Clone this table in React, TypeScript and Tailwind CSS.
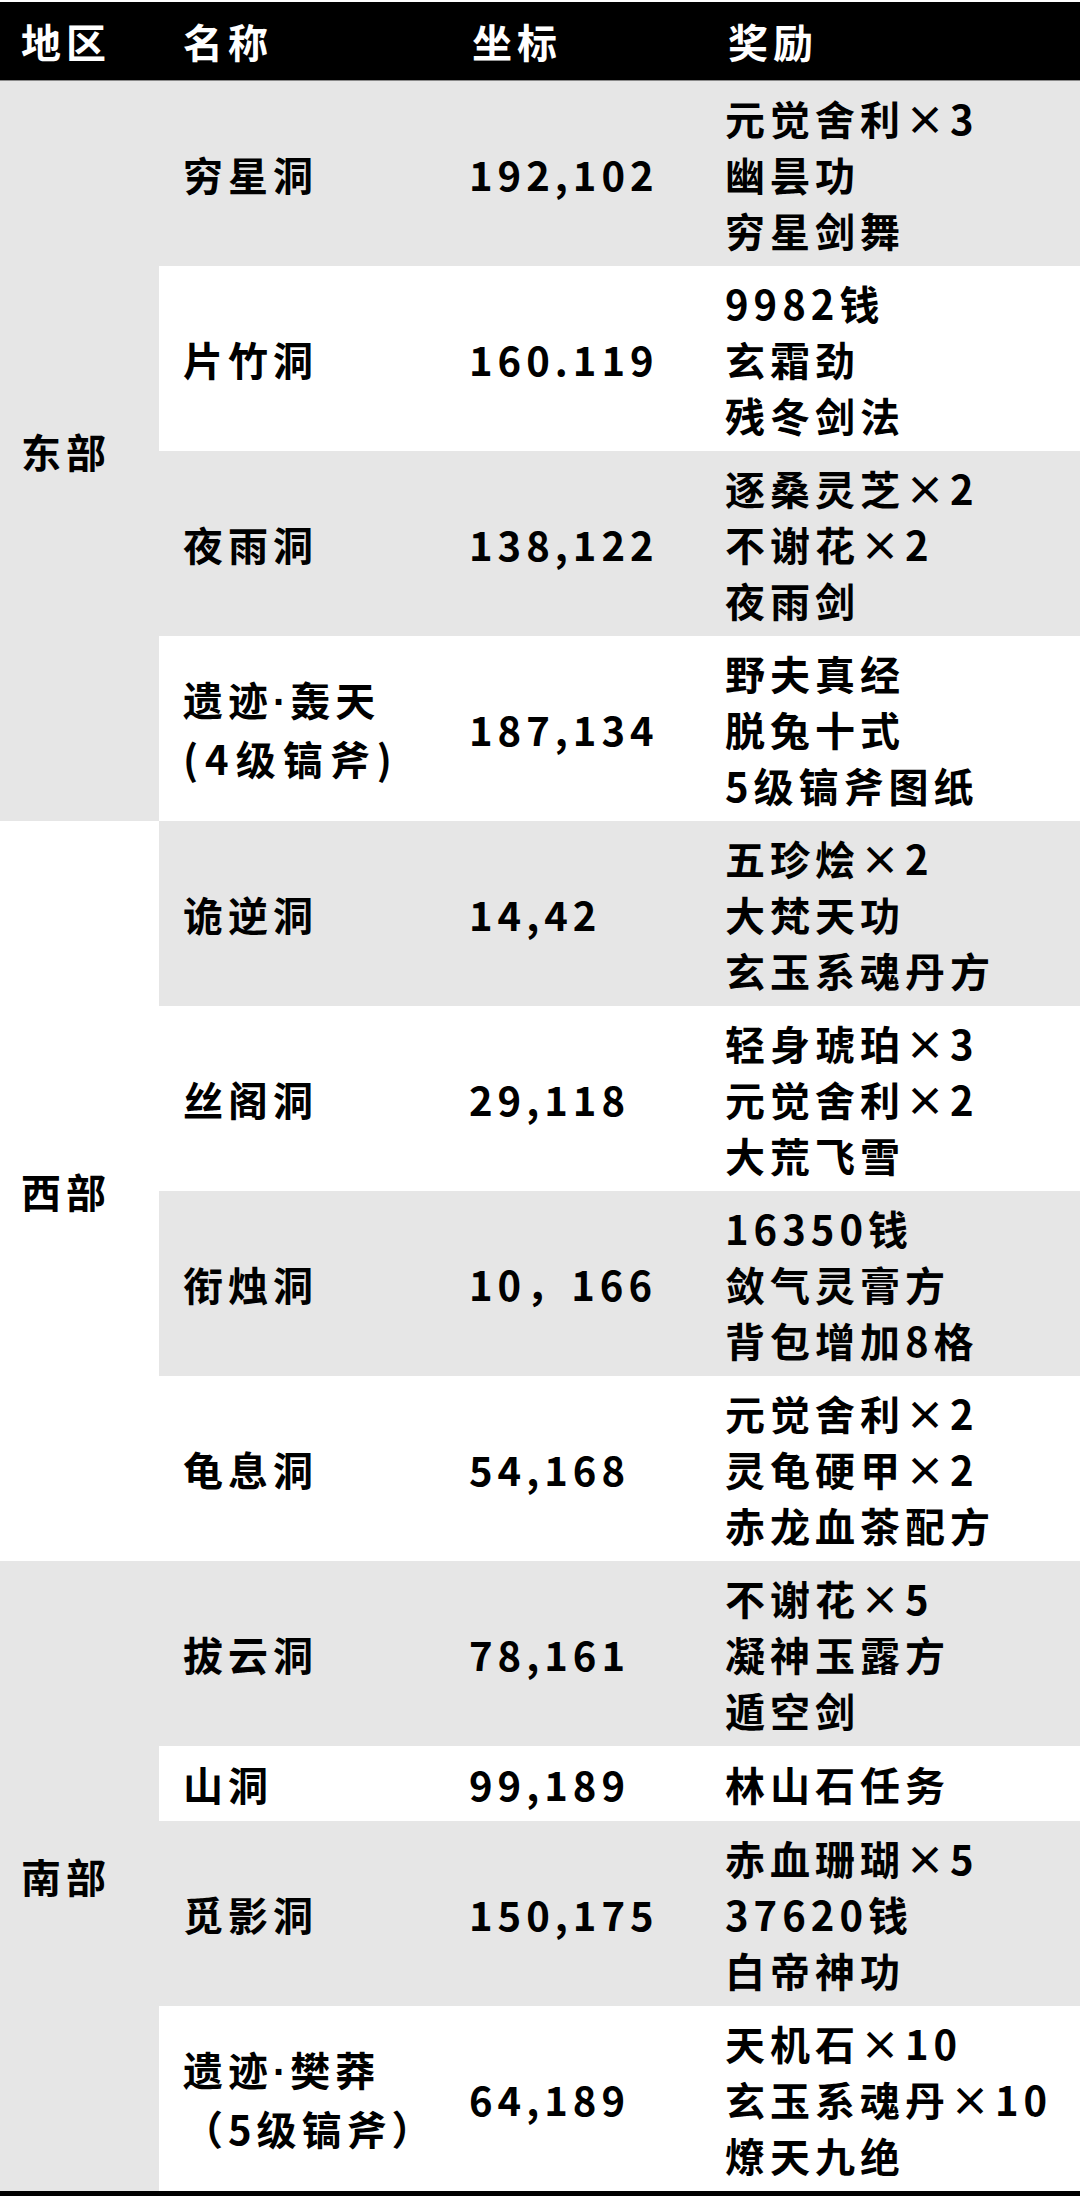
const font = {
  fontFamily: '"Noto Sans CJK SC", "Noto Sans", sans-serif',
};

type Cave = {
  name: string[];
  coord: string;
  rewards: string[];
  short?: boolean;
};

type Region = {
  label: string;
  gray: boolean;
  caves: Cave[];
};

const regions: Region[] = [
  {
    label: "东部",
    gray: true,
    caves: [
      { name: ["穷星洞"], coord: "192,102", rewards: ["元觉舍利×3", "幽昙功", "穷星剑舞"] },
      { name: ["片竹洞"], coord: "160.119", rewards: ["9982钱", "玄霜劲", "残冬剑法"] },
      { name: ["夜雨洞"], coord: "138,122", rewards: ["逐桑灵芝×2", "不谢花×2", "夜雨剑"] },
      { name: ["遗迹·轰天", "(4级镐斧)"], coord: "187,134", rewards: ["野夫真经", "脱兔十式", "5级镐斧图纸"] },
    ],
  },
  {
    label: "西部",
    gray: false,
    caves: [
      { name: ["诡逆洞"], coord: "14,42", rewards: ["五珍烩×2", "大梵天功", "玄玉系魂丹方"] },
      { name: ["丝阁洞"], coord: "29,118", rewards: ["轻身琥珀×3", "元觉舍利×2", "大荒飞雪"] },
      { name: ["衔烛洞"], coord: "10，166", rewards: ["16350钱", "敛气灵膏方", "背包增加8格"] },
      { name: ["龟息洞"], coord: "54,168", rewards: ["元觉舍利×2", "灵龟硬甲×2", "赤龙血茶配方"] },
    ],
  },
  {
    label: "南部",
    gray: true,
    caves: [
      { name: ["拔云洞"], coord: "78,161", rewards: ["不谢花×5", "凝神玉露方", "遁空剑"] },
      { name: ["山洞"], coord: "99,189", rewards: ["林山石任务"], short: true },
      { name: ["觅影洞"], coord: "150,175", rewards: ["赤血珊瑚×5", "37620钱", "白帝神功"] },
      { name: ["遗迹·樊莽", "（5级镐斧）"], coord: "64,189", rewards: ["天机石×10", "玄玉系魂丹×10", "燎天九绝"] },
    ],
  },
];

// the middle dot in the picture is a narrow latin one, not the full-width CJK one
function Name({ text }: { text: string }) {
  const parts = text.split("·");
  if (parts.length < 2) return <>{text}</>;
  return (
    <>
      {parts[0]}
      <span className="tracking-[4px]" style={{ fontFamily: '"Liberation Sans", sans-serif' }}>
        ·
      </span>
      {parts[1]}
    </>
  );
}

export default function App() {
  let rowIndex = 0;

  return (
    <div className="w-[1080px] min-h-[2209px] bg-white text-black pt-[2px]" style={font}>
      {/* header */}
      <div className="grid grid-cols-[159px_286px_256px_1fr] h-[79px] bg-black border-b border-[#8a8a8a] text-white text-[40px] font-bold tracking-[5px] items-center">
        <div className="pl-[21px]">地区</div>
        <div className="pl-[24px]">名称</div>
        <div className="pl-[27px]">坐标</div>
        <div className="pl-[27px]">奖励</div>
      </div>

      <div className="grid grid-cols-[159px_286px_256px_1fr] text-[40px] font-bold tracking-[5px] leading-[56px]">
        {regions.map((region) => {
          const rowStart = rowIndex;
          rowIndex += region.caves.length;
          return (
            <div key={region.label} className="contents">
              <div
                className={`row-span-4 flex items-center pl-[21px] ${region.gray ? "bg-[#e6e6e6]" : "bg-white"}`}
              >
                {region.label}
              </div>
              {region.caves.map((cave, i) => {
                const gray = (rowStart + i) % 2 === 0;
                const bg = gray ? "bg-[#e6e6e6]" : "bg-white";
                const h = cave.short ? "h-[75px]" : "h-[185px]";
                return (
                  <div key={cave.name[0]} className="contents">
                    <div className={`${bg} ${h} flex flex-col justify-center pl-[24px]`}>
                      {cave.name.map((n) => (
                        <div key={n} className={n.startsWith("(") ? "tracking-[7px]" : ""}>
                          <Name text={n} />
                        </div>
                      ))}
                    </div>
                    <div className={`${bg} ${h} flex items-center pl-[24px]`}>{cave.coord}</div>
                    <div className={`${bg} ${h} flex flex-col justify-center pl-[24px] whitespace-nowrap`}>
                      {cave.rewards.map((r) => (
                        <div key={r}>{r}</div>
                      ))}
                    </div>
                  </div>
                );
              })}
            </div>
          );
        })}
      </div>
      <div className="h-[5px] bg-black" />
    </div>
  );
}
